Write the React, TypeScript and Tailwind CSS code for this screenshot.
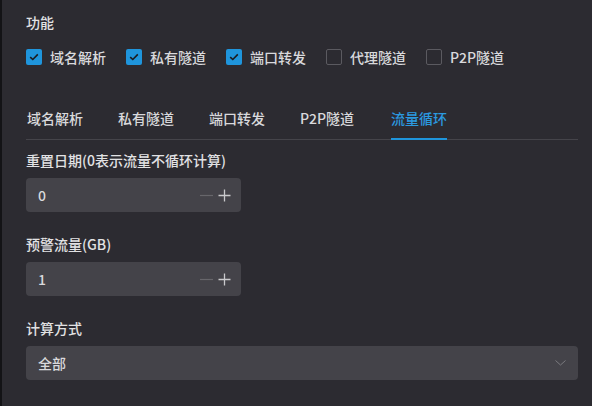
import React from 'react';

const features = [
  { label: '域名解析', checked: true },
  { label: '私有隧道', checked: true },
  { label: '端口转发', checked: true },
  { label: '代理隧道', checked: false },
  { label: 'P2P隧道', checked: false },
];

const tabs = ['域名解析', '私有隧道', '端口转发', 'P2P隧道', '流量循环'];

const Checkbox: React.FC<{ checked: boolean }> = ({ checked }) =>
  checked ? (
    <span className="flex h-4 w-4 items-center justify-center rounded-[2px] bg-[#1f95dc]">
      <svg width="10" height="8" viewBox="0 0 10 8" fill="none">
        <path d="M1.2 4.1 3.8 6.5 8.8 1.4" stroke="#1b1b1f" strokeWidth="1.6" />
      </svg>
    </span>
  ) : (
    <span className="h-4 w-4 rounded-[2px] border border-[#5b5a60]" />
  );

// Number input with the small minus / plus stepper on the right
const NumberField: React.FC<{ value: string }> = ({ value }) => (
  <div className="flex h-[34px] w-[215px] items-center rounded-[4px] bg-[#444349] pl-3 pr-[10px] text-sm text-[#d9d9dc]">
    <span className="flex-1">{value}</span>
    <svg width="13" height="13" viewBox="0 0 13 13" className="mr-[5px]">
      <path d="M0 6.5h13" stroke="#67666b" strokeWidth="1.2" />
    </svg>
    <svg width="13" height="13" viewBox="0 0 13 13">
      <path d="M0.5 6.5h12M6.5 0.5v12" stroke="#c9c9cc" strokeWidth="1.3" />
    </svg>
  </div>
);

const Label: React.FC<{ children: React.ReactNode; className?: string }> = ({ children, className }) => (
  <div className={`text-sm leading-[22px] text-[#e2e2e4] ${className ?? ''}`}>{children}</div>
);

export default function App() {
  return (
    <div
      className="h-[406px] w-[592px] overflow-hidden border-l-2 border-[#131316] bg-[#2c2b31] pl-[24px] pr-[14px] pt-[11px] font-medium"
      style={{ fontFamily: '"Noto Sans CJK SC", "Noto Sans", sans-serif' }}
    >
      <Label>功能</Label>

      {/* Feature checkboxes */}
      <div className="mt-[13px] flex items-center">
        {features.map((f) => (
          <label key={f.label} className="flex w-[100px] items-center gap-2 text-sm leading-[22px] text-[#d9d9dc]">
            <Checkbox checked={f.checked} />
            {f.label}
          </label>
        ))}
      </div>

      {/* Tabs */}
      <div className="mt-[39px] flex gap-[35px] border-b border-[#45444a] pl-px">
        {tabs.map((t, i) => {
          const active = i === tabs.length - 1;
          return (
            <div
              key={t}
              className={`relative min-w-[56px] pb-[10px] text-sm leading-[22px] ${active ? 'text-[#2b9ae0]' : 'text-[#d9d9dc]'}`}
            >
              {t}
              {active && <span className="absolute bottom-[-1px] left-0 right-0 h-[2px] bg-[#1f95dc]" />}
            </div>
          );
        })}
      </div>

      <Label className="mt-[9px]">重置日期(0表示流量不循环计算)</Label>
      <div className="mt-[7px]">
        <NumberField value="0" />
      </div>

      <Label className="mt-[21px]">预警流量(GB)</Label>
      <div className="mt-[7px]">
        <NumberField value="1" />
      </div>

      <Label className="mt-[21px]">计算方式</Label>
      <div className="mt-[7px] flex h-[34px] items-center rounded-[4px] bg-[#444349] pl-3 pr-3 text-sm text-[#d9d9dc]">
        <span className="flex-1">全部</span>
        <svg width="11" height="6" viewBox="0 0 11 6" fill="none">
          <path d="M0.5 0.5 5.5 5 10.5 0.5" stroke="#7b7a7f" strokeWidth="1" />
        </svg>
      </div>
    </div>
  );
}
